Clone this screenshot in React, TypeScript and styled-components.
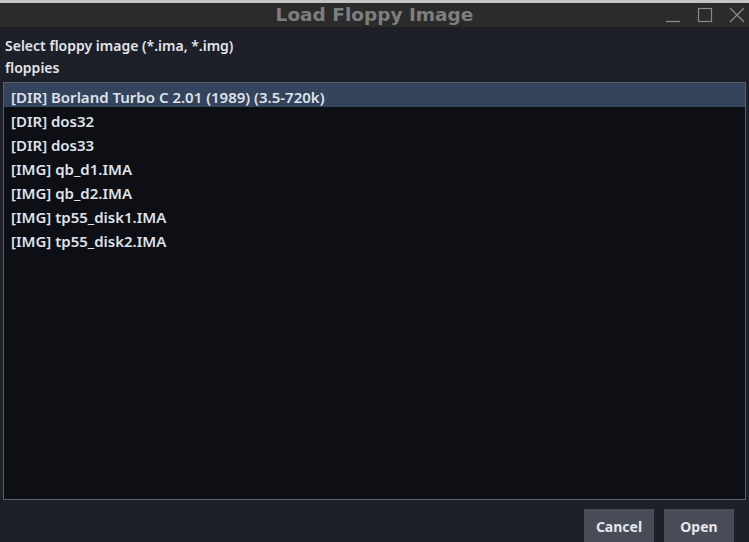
import styled, { createGlobalStyle } from 'styled-components'

const GlobalStyle = createGlobalStyle`
  html, body {
    margin: 0;
    padding: 0;
    background: #1e2029;
    overflow: hidden;
  }
`

const Window = styled.div`
  width: 749px;
  height: 542px;
  display: flex;
  flex-direction: column;
  overflow: hidden;
  background: #1e2029;
  border-top: 3px solid #c4c4c4;
  box-sizing: border-box;
`

const TitleBar = styled.div`
  height: 24px;
  flex: none;
  background: #2b2b2b;
  display: flex;
  align-items: center;
  position: relative;
`

const Title = styled.div`
  flex: 1;
  text-align: center;
  font-family: 'DejaVu Sans', sans-serif;
  font-weight: bold;
  font-size: 18.5px;
  color: #7e7e7e;
  line-height: 24px;
`

const WinButtons = styled.div`
  position: absolute;
  right: 4px;
  top: 0;
  height: 24px;
  display: flex;
  align-items: center;
  gap: 16px;
`

const Body = styled.div`
  flex: 1;
  display: flex;
  flex-direction: column;
  padding: 8px 3px 0 3px;
  min-height: 0;
`

const Label = styled.div`
  font-family: 'Noto Sans', sans-serif;
  font-weight: 600;
  font-size: 14px;
  color: #e2e4ea;
  height: 22px;
  line-height: 22px;
  padding-left: 2px;
`

const ListBox = styled.div`
  margin-top: 3px;
  height: 418px;
  flex: none;
  background: #0d0f14;
  border: 1px solid #5c5f66;
  box-sizing: border-box;
  display: flex;
  flex-direction: column;
`

const Row = styled.div<{ $selected?: boolean }>`
  height: 24px;
  box-sizing: border-box;
  padding: 2px 0 0 7px;
  line-height: 24px;
  font-family: 'Noto Sans', sans-serif;
  font-weight: 600;
  font-size: 15px;
  color: #dfe2e9;
  background: ${(p) => (p.$selected ? '#35445d' : 'transparent')};
`

const Footer = styled.div`
  display: flex;
  justify-content: flex-end;
  gap: 10px;
  padding: 9px 12px 0 0;
`

const Button = styled.button`
  width: 70px;
  height: 36px;
  border: none;
  background: #474c56;
  color: #e3e6ec;
  font-family: 'Noto Sans', sans-serif;
  font-weight: bold;
  font-size: 14px;
  padding: 0;
  padding-bottom: 2px;
`

const files = [
  '[DIR] Borland Turbo C 2.01 (1989) (3.5-720k)',
  '[DIR] dos32',
  '[DIR] dos33',
  '[IMG] qb_d1.IMA',
  '[IMG] qb_d2.IMA',
  '[IMG] tp55_disk1.IMA',
  '[IMG] tp55_disk2.IMA',
]

export default function App() {
  return (
    <>
      <GlobalStyle />
      <Window>
        <TitleBar>
          <Title>Load Floppy Image</Title>
          <WinButtons>
            <svg width="16" height="16" viewBox="0 0 16 16">
              <path d="M1 14.5H15" stroke="#8a8a8a" strokeWidth="1.3" fill="none" />
            </svg>
            <svg width="16" height="16" viewBox="0 0 16 16">
              <rect x="1.5" y="1.5" width="13" height="13" stroke="#8a8a8a" strokeWidth="1.2" fill="none" />
            </svg>
            <svg width="16" height="16" viewBox="0 0 16 16">
              <path d="M1 1L15 15M15 1L1 15" stroke="#8a8a8a" strokeWidth="1.3" fill="none" />
            </svg>
          </WinButtons>
        </TitleBar>
        <Body>
          <Label>Select floppy image (*.ima, *.img)</Label>
          <Label>floppies</Label>
          <ListBox>
            {files.map((f, i) => (
              <Row key={f} $selected={i === 0}>
                {f}
              </Row>
            ))}
          </ListBox>
          <Footer>
            <Button>Cancel</Button>
            <Button>Open</Button>
          </Footer>
        </Body>
      </Window>
    </>
  )
}
